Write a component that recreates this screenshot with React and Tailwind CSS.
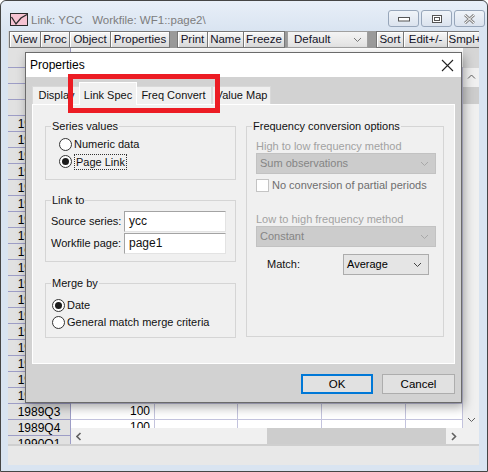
const quarters = Array.from(
  { length: 21 },
  (_, i) => `${1985 + Math.floor(i / 4)}Q${(i % 4) + 1}`
);
const rows = ["", "", "", ...quarters];
const cols = ["w-[84px]", "w-[83px]", "w-[84px]", "w-[84px]", "flex-1"];

const Chevron = ({ dir = "down", color = "#555", className = "" }) => {
  const d = {
    down: "M1 1 L4.5 4.5 L8 1",
    up: "M1 4.5 L4.5 1 L8 4.5",
    left: "M4.5 1 L1 4.5 L4.5 8",
    right: "M1 1 L4.5 4.5 L1 8",
  }[dir];
  const vertical = dir === "down" || dir === "up";
  return (
    <svg
      width={vertical ? 9 : 6}
      height={vertical ? 6 : 9}
      viewBox={vertical ? "0 0 9 6" : "0 0 6 9"}
      className={className}
    >
      <path d={d} fill="none" stroke={color} strokeWidth={vertical ? 1 : 1.6} />
    </svg>
  );
};

const ToolButton = ({ w, first, children }) => (
  <div
    className={`flex h-full shrink-0 items-center justify-center border-y border-r border-[#777] bg-gradient-to-b from-[#f8f8f8] to-[#d9d9d9] text-[11.5px] text-[#141428] shadow-[inset_1px_1px_0_#fff] ${w} ${first ? "border-l" : ""}`}
  >
    {children}
  </div>
);

const Radio = ({ checked }) => (
  <span className="flex h-[13px] w-[13px] shrink-0 items-center justify-center rounded-full border border-[#333] bg-white">
    {checked && <span className="h-[7px] w-[7px] rounded-full bg-[#1c1c1c]" />}
  </span>
);

const Group = ({ label, className, children }) => (
  <div className={`relative shrink-0 border border-[#d5d5d5] ${className}`}>
    <span className="absolute -top-[7px] left-[5px] bg-[#f0f0f0] px-[1px] leading-[13px] text-[#111]">
      {label}
    </span>
    {children}
  </div>
);

const Select = ({ value, disabled, w }) => (
  <div
    className={`flex h-[21px] items-center justify-between border pl-[3px] pr-[6px] ${w} ${
      disabled
        ? "border-[#c2c2c2] bg-[#cccccc] text-[#858585]"
        : "border-[#acacac] bg-[#e5e5e5] text-black"
    }`}
  >
    <span>{value}</span>
    <Chevron color={disabled ? "#a8a8a8" : "#444"} />
  </div>
);

const Dialog = () => (
  <div className="absolute left-[25px] top-[52px] flex h-[351px] w-[437px] flex-col border border-[#6b6b6b] bg-[#d2d2d2] text-[11px] leading-[13px] shadow-[2px_4px_10px_rgba(0,0,0,0.35)]">
    <div className="flex h-[24px] shrink-0 items-center justify-between bg-white pl-[4px] pr-[7px]">
      <span className="text-[12px] text-black">Properties</span>
      <svg width="13" height="13" viewBox="0 0 13 13">
        <path d="M1 1 L12 12 M12 1 L1 12" stroke="#222" strokeWidth="1.1" />
      </svg>
    </div>

    <div className="flex h-[27px] shrink-0 items-end pl-[6px]">
      <div className="flex h-[18px] w-[49px] items-center justify-center border border-b-0 border-[#d9d9d9] bg-[#f0f0f0] text-[#111]">
        Display
      </div>
      <div className="relative z-10 -mx-[2px] -mb-[1px] flex h-[23px] w-[58px] items-center justify-center border border-b-0 border-white bg-[#f0f0f0] pt-[3px] text-[#111]">
        Link Spec
      </div>
      <div className="flex h-[18px] w-[77px] items-center justify-center border border-b-0 border-[#d9d9d9] bg-[#f0f0f0] text-[#111]">
        Freq Convert
      </div>
      <div className="flex h-[18px] w-[59px] items-center justify-center border border-b-0 border-[#d9d9d9] bg-[#f0f0f0] text-[#111]">
        Value Map
      </div>
    </div>

    <div className="mx-[6px] flex h-[260px] shrink-0 gap-[10px] border border-white bg-[#f0f0f0] pl-[12px] pt-[21px]">
      <div className="flex w-[191px] flex-col">
        <Group label="Series values" className="h-[54px]">
          <div className="flex flex-col pl-[13px] pt-[9px] text-[#111]">
            <div className="flex h-[17px] items-center gap-[2px]">
              <Radio />
              <span>Numeric data</span>
            </div>
            <div className="flex h-[17px] items-center gap-[2px]">
              <Radio checked />
              <span className="border border-dotted border-[#333] px-[1px] leading-[14px]">
                Page Link
              </span>
            </div>
          </div>
        </Group>

        <Group label="Link to" className="mt-[20px] h-[62px]">
          <div className="flex flex-col gap-[1px] pl-[5px] pt-[10px] text-[#111]">
            <div className="flex h-[21px] items-center">
              <span className="w-[73px]">Source series:</span>
              <div className="flex h-full w-[102px] items-center border border-[#a3a3a3] border-b-[#e3e3e3] border-r-[#e3e3e3] bg-white pl-[4px] text-[12px]">
                ycc
              </div>
            </div>
            <div className="flex h-[21px] items-center">
              <span className="w-[73px]">Workfile page:</span>
              <div className="flex h-full w-[102px] items-center border border-[#a3a3a3] border-b-[#e3e3e3] border-r-[#e3e3e3] bg-white pl-[4px] text-[12px]">
                page1
              </div>
            </div>
          </div>
        </Group>

        <Group label="Merge by" className="mt-[21px] h-[55px]">
          <div className="flex flex-col pl-[6px] pt-[13px] text-[#111]">
            <div className="flex h-[17px] items-center gap-[2px]">
              <Radio checked />
              <span>Date</span>
            </div>
            <div className="flex h-[17px] items-center gap-[2px]">
              <Radio />
              <span>General match merge criteria</span>
            </div>
          </div>
        </Group>
      </div>

      <Group label="Frequency conversion options" className="h-[211px] w-[198px]">
        <div className="flex flex-col pl-[9px] pt-[12px]">
          <div className="h-[14px] leading-[14px] text-[#a2a2a2]">
            High to low frequency method
          </div>
          <Select value="Sum observations" disabled w="w-[180px]" />
          <div className="mt-[5px] flex h-[13px] items-center gap-[3px]">
            <span className="h-[13px] w-[13px] border border-[#c4c4c4] bg-white" />
            <span className="text-[#6e6e6e]">No conversion of partial periods</span>
          </div>
          <div className="mt-[20px] h-[14px] leading-[14px] text-[#a2a2a2]">
            Low to high frequency method
          </div>
          <Select value="Constant" disabled w="w-[180px]" />
          <div className="mt-[7px] flex h-[21px] items-center pl-[11px]">
            <span className="w-[76px] text-[#111]">Match:</span>
            <Select value="Average" w="w-[86px]" />
          </div>
        </div>
      </Group>
    </div>

    <div className="mt-[10px] flex justify-end gap-[9px] pr-[6px]">
      <div className="flex h-[20px] w-[72px] items-center justify-center border-2 border-[#0078d7] bg-[#e1e1e1] text-[11.5px] text-black">
        OK
      </div>
      <div className="flex h-[20px] w-[73px] items-center justify-center border border-[#adadad] bg-[#e1e1e1] text-[11.5px] text-black">
        Cancel
      </div>
    </div>

    <div className="absolute left-[42px] top-[21px] h-[39px] w-[152px] border-[5px] border-[#ec1c24]" />
  </div>
);

export default function App() {
  return (
    <div className="relative h-[472px] w-[488px] overflow-hidden bg-white font-['Liberation_Sans',Arial,sans-serif]">
      <div className="flex h-full flex-col rounded-t-[6px] border border-[#454545] bg-[#d9e4f1]">
        {/* title bar */}
        <div className="flex h-[30px] shrink-0 items-start rounded-t-[6px] bg-gradient-to-b from-[#e8eff8] to-[#d9e4f1] pl-[9px] pr-[2px]">
          <svg width="19" height="14" viewBox="0 0 19 14" className="mt-[12px]">
            <rect x="0.5" y="0.5" width="17" height="12" fill="#f6c3d2" stroke="#2a2a2a" />
            <polyline points="1.5,4 6,11 11,5 17,1.5" fill="none" stroke="#2a2a2a" strokeWidth="1.3" />
          </svg>
          <span className="ml-[2px] mt-[12px] whitespace-pre text-[11.5px] leading-[14px] text-[#7d7d7d]">
            {"Link: YCC   Workfile: WF1::page2\\"}
          </span>
          <div className="ml-auto mt-[9px] flex gap-[2px]">
            <div className="flex h-[17px] w-[31px] items-end justify-center rounded-[3px] border border-[#97a6ba] bg-gradient-to-b from-[#f0f4f9] to-[#dbe3ee] pb-[4px]">
              <svg width="12" height="5" viewBox="0 0 12 5">
                <rect x="0.5" y="0.5" width="11" height="3.5" fill="#fff" stroke="#555" />
              </svg>
            </div>
            <div className="flex h-[17px] w-[31px] items-center justify-center rounded-[3px] border border-[#97a6ba] bg-gradient-to-b from-[#f0f4f9] to-[#dbe3ee]">
              <svg width="10" height="8" viewBox="0 0 10 8">
                <rect x="0.5" y="0.5" width="9" height="7" fill="#fff" stroke="#555" />
                <rect x="2.5" y="2.5" width="5" height="3" fill="none" stroke="#555" />
              </svg>
            </div>
            <div className="flex h-[17px] w-[31px] items-center justify-center rounded-[3px] border border-[#97a6ba] bg-gradient-to-b from-[#f0f4f9] to-[#dbe3ee]">
              <svg width="13" height="10" viewBox="0 0 13 10">
                <path d="M2 1 L11 9 M11 1 L2 9" stroke="#8a8a8a" strokeWidth="3" />
                <path d="M2 1 L11 9 M11 1 L2 9" stroke="#fff" strokeWidth="1" />
              </svg>
            </div>
          </div>
        </div>

        <div className="flex min-h-0 flex-1 flex-col pb-[6px] pl-[7px] pr-[8px]">
          {/* toolbar */}
          <div className="flex h-[17px] shrink-0 overflow-hidden bg-[#d4d4d4] pl-[1px]">
            <ToolButton w="w-[32px]" first>View</ToolButton>
            <ToolButton w="w-[29px]">Proc</ToolButton>
            <ToolButton w="w-[41px]">Object</ToolButton>
            <ToolButton w="w-[59px]">Properties</ToolButton>
            <div className="h-full w-[7px] shrink-0 bg-[#9a9a9a]" />
            <ToolButton w="w-[31px]" first>Print</ToolButton>
            <ToolButton w="w-[36px]">Name</ToolButton>
            <ToolButton w="w-[41px]">Freeze</ToolButton>
            <div className="h-full w-[2px] shrink-0 bg-[#9a9a9a]" />
            <div className="flex h-full w-[81px] shrink-0 items-center justify-between border border-[#a0a0a0] bg-gradient-to-b from-[#f4f4f4] to-[#e2e2e2] pl-[6px] pr-[5px] text-[11.5px] text-[#141428]">
              <span>Default</span>
              <Chevron color="#777" />
            </div>
            <div className="h-full w-[8px] shrink-0 bg-[#9a9a9a]" />
            <ToolButton w="w-[28px]" first>Sort</ToolButton>
            <ToolButton w="w-[44px]">Edit+/-</ToolButton>
            <ToolButton w="w-[42px]">Smpl+/-</ToolButton>
          </div>

          {/* spreadsheet */}
          <div className="flex min-h-0 flex-1">
            <div className="flex w-[63px] shrink-0 flex-col overflow-hidden">
              <div className="h-[20px] shrink-0 border-b border-r border-[#9d9dc6] bg-[#e1e1e1]" />
              {rows.map((r, i) => (
                <div
                  key={i}
                  className="flex h-[16px] shrink-0 items-center justify-center border-b border-r border-[#9d9dc6] bg-[#e1e1e1] text-[12px] text-black"
                >
                  {r}
                </div>
              ))}
            </div>

            <div className="flex min-w-0 flex-1 flex-col">
              <div className="flex min-h-0 flex-1">
                <div className="flex min-w-0 flex-1 flex-col overflow-hidden bg-white">
                  <div className="h-[20px] shrink-0 border-b border-[#c3c3dd]" />
                  {rows.map((r, i) => (
                    <div key={i} className="flex h-[16px] shrink-0 border-b border-[#c3c3dd]">
                      {cols.map((w, c) => (
                        <div
                          key={c}
                          className={`${w} shrink-0 border-r border-[#c3c3dd] pr-[4px] text-right text-[12px] leading-[15px] text-black`}
                        >
                          {/* rows above 1989Q3 sit under the dialog */}
                          {i >= 21 && c === 0 ? "100" : ""}
                        </div>
                      ))}
                    </div>
                  ))}
                </div>
                <div className="flex w-[16px] shrink-0 flex-col bg-[#f0f0f0]">
                  <div className="h-[20px] shrink-0 bg-[#d6d6d6]" />
                  <div className="flex h-[17px] shrink-0 items-center justify-center">
                    <Chevron dir="up" color="#606060" />
                  </div>
                  <div className="mt-[2px] h-[17px] shrink-0 bg-[#cdcdcd]" />
                  <div className="flex-1" />
                  <div className="flex h-[17px] shrink-0 items-center justify-center">
                    <Chevron dir="down" color="#606060" />
                  </div>
                </div>
              </div>
              <div className="flex h-[16px] shrink-0 items-center bg-[#f0f0f0]">
                <div className="flex w-[16px] justify-center">
                  <Chevron dir="left" color="#606060" />
                </div>
                <div className="ml-[180px] h-full w-[179px] bg-[#cdcdcd]" />
                <div className="flex w-[16px] justify-center">
                  <Chevron dir="right" color="#606060" />
                </div>
              </div>
            </div>
          </div>

          {/* status bar */}
          <div className="h-[21px] shrink-0 border-t-2 border-[#cfcfcf] bg-[#e8e8e8]" />
        </div>
      </div>

      <Dialog />
    </div>
  );
}
